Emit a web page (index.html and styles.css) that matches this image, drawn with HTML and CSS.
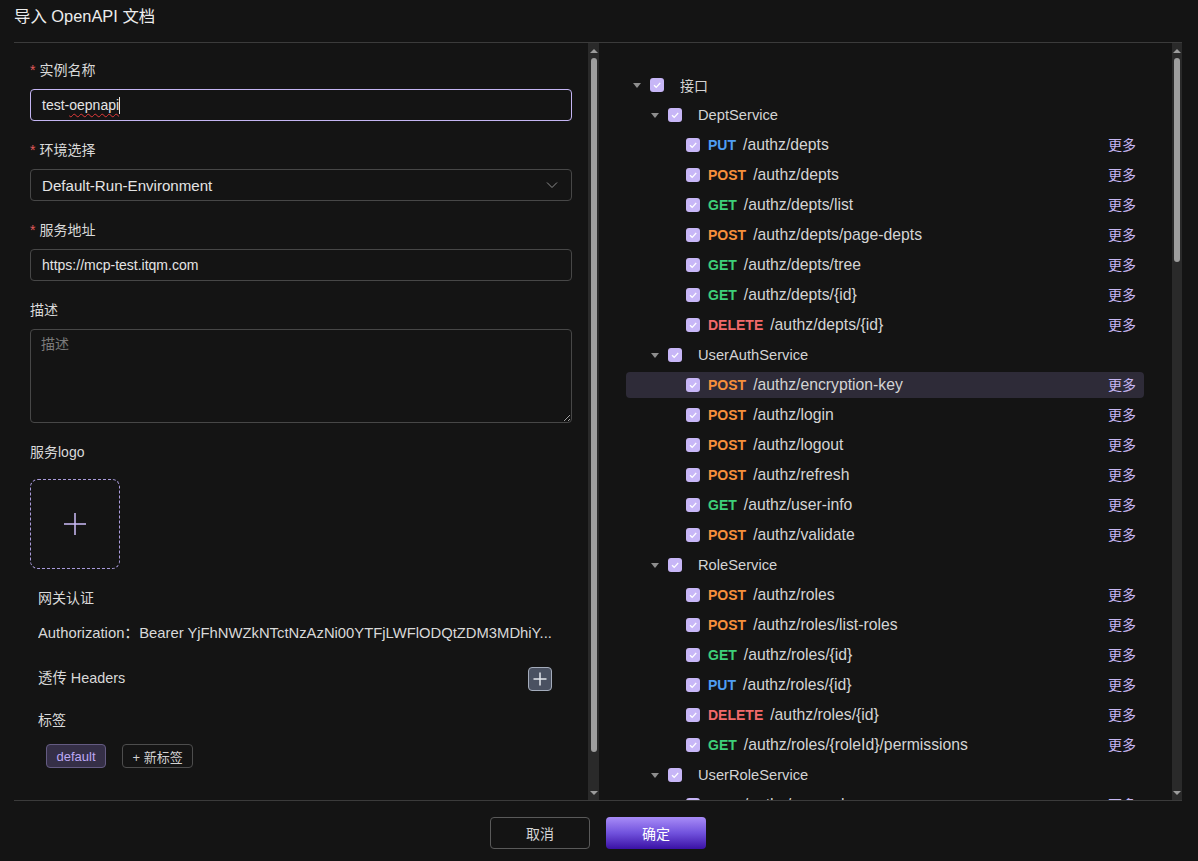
FILE: index.html
```html
<!DOCTYPE html>
<html lang="zh-CN">
<head>
<meta charset="utf-8">
<title>导入 OpenAPI 文档</title>
<link rel="stylesheet" href="styles.css">
</head>
<body>
<div class="dialog">
  <header class="dlg-header">
    <h1 class="dlg-title">导入 OpenAPI 文档</h1>
  </header>

  <main class="dlg-body">
    <section class="pane pane-left">
      <div class="form">
        <div class="field">
          <div class="label"><span class="req">*</span>实例名称</div>
          <div class="input focused">test-<span class="misspelled">oepnapi</span><span class="text-caret"></span></div>
        </div>
        <div class="field">
          <div class="label"><span class="req">*</span>环境选择</div>
          <div class="input select">
            <span class="select-value">Default-Run-Environment</span>
            <svg class="chevron" width="12" height="12" viewBox="0 0 12 12"><polyline points="1,3.5 6,8.5 11,3.5" fill="none" stroke="#8c8c8c" stroke-width="1"/></svg>
          </div>
        </div>
        <div class="field">
          <div class="label"><span class="req">*</span>服务地址</div>
          <div class="input">https://mcp-test.itqm.com</div>
        </div>
        <div class="field">
          <div class="label">描述</div>
          <textarea class="textarea" placeholder="描述"></textarea>
        </div>
        <div class="field">
          <div class="label label-logo">服务logo</div>
          <div class="upload">
            <svg width="24" height="24" viewBox="0 0 24 24"><path d="M12 1v22M1 12h22" stroke="#cbbcf7" stroke-width="1.5" fill="none"/></svg>
          </div>
        </div>

        <div class="sub">
          <div class="sub-title">网关认证</div>
          <div class="auth-value">Authorization：Bearer YjFhNWZkNTctNzAzNi00YTFjLWFlODQtZDM3MDhiY...</div>
          <div class="headers-row">
            <span>透传 Headers</span>
            <span class="icon-btn">
              <svg width="16" height="16" viewBox="0 0 16 16"><path d="M8 1.5v13M1.5 8h13" stroke="#e3e6ec" stroke-width="1.5" fill="none"/></svg>
            </span>
          </div>
          <div class="sub-title tags-title">标签</div>
          <div class="tags">
            <span class="tag tag-default">default</span>
            <span class="tag tag-add">+ 新标签</span>
          </div>
        </div>
      </div>
      <div class="scrollbar sb-left">
        <span class="sb-arrow up"></span>
        <div class="sb-track"><div class="sb-thumb" style="height:694px"></div></div>
        <span class="sb-arrow down"></span>
      </div>
    </section>

    <section class="pane pane-right">
      <div class="tree">
        <div class="node"><span class="caret"></span><span class="cb"><svg width="10" height="10" viewBox="0 0 10 10"><polyline points="2,5.2 4.2,7.3 8.2,3" fill="none" stroke="#fff" stroke-width="1.2"/></svg></span><span class="node-label">接口</span></div>

        <div class="node"><span class="indent"></span><span class="caret"></span><span class="cb"><svg width="10" height="10" viewBox="0 0 10 10"><polyline points="2,5.2 4.2,7.3 8.2,3" fill="none" stroke="#fff" stroke-width="1.2"/></svg></span><span class="node-label svc">DeptService</span></div>
        <div class="node leaf"><span class="indent"></span><span class="indent"></span><span class="caret empty"></span><span class="cb"><svg width="10" height="10" viewBox="0 0 10 10"><polyline points="2,5.2 4.2,7.3 8.2,3" fill="none" stroke="#fff" stroke-width="1.2"/></svg></span><span class="node-label"><b class="m put">PUT</b><span class="path">/authz/depts</span></span><span class="more">更多</span></div>
        <div class="node leaf"><span class="indent"></span><span class="indent"></span><span class="caret empty"></span><span class="cb"><svg width="10" height="10" viewBox="0 0 10 10"><polyline points="2,5.2 4.2,7.3 8.2,3" fill="none" stroke="#fff" stroke-width="1.2"/></svg></span><span class="node-label"><b class="m post">POST</b><span class="path">/authz/depts</span></span><span class="more">更多</span></div>
        <div class="node leaf"><span class="indent"></span><span class="indent"></span><span class="caret empty"></span><span class="cb"><svg width="10" height="10" viewBox="0 0 10 10"><polyline points="2,5.2 4.2,7.3 8.2,3" fill="none" stroke="#fff" stroke-width="1.2"/></svg></span><span class="node-label"><b class="m get">GET</b><span class="path">/authz/depts/list</span></span><span class="more">更多</span></div>
        <div class="node leaf"><span class="indent"></span><span class="indent"></span><span class="caret empty"></span><span class="cb"><svg width="10" height="10" viewBox="0 0 10 10"><polyline points="2,5.2 4.2,7.3 8.2,3" fill="none" stroke="#fff" stroke-width="1.2"/></svg></span><span class="node-label"><b class="m post">POST</b><span class="path">/authz/depts/page-depts</span></span><span class="more">更多</span></div>
        <div class="node leaf"><span class="indent"></span><span class="indent"></span><span class="caret empty"></span><span class="cb"><svg width="10" height="10" viewBox="0 0 10 10"><polyline points="2,5.2 4.2,7.3 8.2,3" fill="none" stroke="#fff" stroke-width="1.2"/></svg></span><span class="node-label"><b class="m get">GET</b><span class="path">/authz/depts/tree</span></span><span class="more">更多</span></div>
        <div class="node leaf"><span class="indent"></span><span class="indent"></span><span class="caret empty"></span><span class="cb"><svg width="10" height="10" viewBox="0 0 10 10"><polyline points="2,5.2 4.2,7.3 8.2,3" fill="none" stroke="#fff" stroke-width="1.2"/></svg></span><span class="node-label"><b class="m get">GET</b><span class="path">/authz/depts/{id}</span></span><span class="more">更多</span></div>
        <div class="node leaf"><span class="indent"></span><span class="indent"></span><span class="caret empty"></span><span class="cb"><svg width="10" height="10" viewBox="0 0 10 10"><polyline points="2,5.2 4.2,7.3 8.2,3" fill="none" stroke="#fff" stroke-width="1.2"/></svg></span><span class="node-label"><b class="m delete">DELETE</b><span class="path">/authz/depts/{id}</span></span><span class="more">更多</span></div>

        <div class="node"><span class="indent"></span><span class="caret"></span><span class="cb"><svg width="10" height="10" viewBox="0 0 10 10"><polyline points="2,5.2 4.2,7.3 8.2,3" fill="none" stroke="#fff" stroke-width="1.2"/></svg></span><span class="node-label svc">UserAuthService</span></div>
        <div class="node leaf hover"><span class="indent"></span><span class="indent"></span><span class="caret empty"></span><span class="cb"><svg width="10" height="10" viewBox="0 0 10 10"><polyline points="2,5.2 4.2,7.3 8.2,3" fill="none" stroke="#fff" stroke-width="1.2"/></svg></span><span class="node-label"><b class="m post">POST</b><span class="path">/authz/encryption-key</span></span><span class="more">更多</span></div>
        <div class="node leaf"><span class="indent"></span><span class="indent"></span><span class="caret empty"></span><span class="cb"><svg width="10" height="10" viewBox="0 0 10 10"><polyline points="2,5.2 4.2,7.3 8.2,3" fill="none" stroke="#fff" stroke-width="1.2"/></svg></span><span class="node-label"><b class="m post">POST</b><span class="path">/authz/login</span></span><span class="more">更多</span></div>
        <div class="node leaf"><span class="indent"></span><span class="indent"></span><span class="caret empty"></span><span class="cb"><svg width="10" height="10" viewBox="0 0 10 10"><polyline points="2,5.2 4.2,7.3 8.2,3" fill="none" stroke="#fff" stroke-width="1.2"/></svg></span><span class="node-label"><b class="m post">POST</b><span class="path">/authz/logout</span></span><span class="more">更多</span></div>
        <div class="node leaf"><span class="indent"></span><span class="indent"></span><span class="caret empty"></span><span class="cb"><svg width="10" height="10" viewBox="0 0 10 10"><polyline points="2,5.2 4.2,7.3 8.2,3" fill="none" stroke="#fff" stroke-width="1.2"/></svg></span><span class="node-label"><b class="m post">POST</b><span class="path">/authz/refresh</span></span><span class="more">更多</span></div>
        <div class="node leaf"><span class="indent"></span><span class="indent"></span><span class="caret empty"></span><span class="cb"><svg width="10" height="10" viewBox="0 0 10 10"><polyline points="2,5.2 4.2,7.3 8.2,3" fill="none" stroke="#fff" stroke-width="1.2"/></svg></span><span class="node-label"><b class="m get">GET</b><span class="path">/authz/user-info</span></span><span class="more">更多</span></div>
        <div class="node leaf"><span class="indent"></span><span class="indent"></span><span class="caret empty"></span><span class="cb"><svg width="10" height="10" viewBox="0 0 10 10"><polyline points="2,5.2 4.2,7.3 8.2,3" fill="none" stroke="#fff" stroke-width="1.2"/></svg></span><span class="node-label"><b class="m post">POST</b><span class="path">/authz/validate</span></span><span class="more">更多</span></div>

        <div class="node"><span class="indent"></span><span class="caret"></span><span class="cb"><svg width="10" height="10" viewBox="0 0 10 10"><polyline points="2,5.2 4.2,7.3 8.2,3" fill="none" stroke="#fff" stroke-width="1.2"/></svg></span><span class="node-label svc">RoleService</span></div>
        <div class="node leaf"><span class="indent"></span><span class="indent"></span><span class="caret empty"></span><span class="cb"><svg width="10" height="10" viewBox="0 0 10 10"><polyline points="2,5.2 4.2,7.3 8.2,3" fill="none" stroke="#fff" stroke-width="1.2"/></svg></span><span class="node-label"><b class="m post">POST</b><span class="path">/authz/roles</span></span><span class="more">更多</span></div>
        <div class="node leaf"><span class="indent"></span><span class="indent"></span><span class="caret empty"></span><span class="cb"><svg width="10" height="10" viewBox="0 0 10 10"><polyline points="2,5.2 4.2,7.3 8.2,3" fill="none" stroke="#fff" stroke-width="1.2"/></svg></span><span class="node-label"><b class="m post">POST</b><span class="path">/authz/roles/list-roles</span></span><span class="more">更多</span></div>
        <div class="node leaf"><span class="indent"></span><span class="indent"></span><span class="caret empty"></span><span class="cb"><svg width="10" height="10" viewBox="0 0 10 10"><polyline points="2,5.2 4.2,7.3 8.2,3" fill="none" stroke="#fff" stroke-width="1.2"/></svg></span><span class="node-label"><b class="m get">GET</b><span class="path">/authz/roles/{id}</span></span><span class="more">更多</span></div>
        <div class="node leaf"><span class="indent"></span><span class="indent"></span><span class="caret empty"></span><span class="cb"><svg width="10" height="10" viewBox="0 0 10 10"><polyline points="2,5.2 4.2,7.3 8.2,3" fill="none" stroke="#fff" stroke-width="1.2"/></svg></span><span class="node-label"><b class="m put">PUT</b><span class="path">/authz/roles/{id}</span></span><span class="more">更多</span></div>
        <div class="node leaf"><span class="indent"></span><span class="indent"></span><span class="caret empty"></span><span class="cb"><svg width="10" height="10" viewBox="0 0 10 10"><polyline points="2,5.2 4.2,7.3 8.2,3" fill="none" stroke="#fff" stroke-width="1.2"/></svg></span><span class="node-label"><b class="m delete">DELETE</b><span class="path">/authz/roles/{id}</span></span><span class="more">更多</span></div>
        <div class="node leaf"><span class="indent"></span><span class="indent"></span><span class="caret empty"></span><span class="cb"><svg width="10" height="10" viewBox="0 0 10 10"><polyline points="2,5.2 4.2,7.3 8.2,3" fill="none" stroke="#fff" stroke-width="1.2"/></svg></span><span class="node-label"><b class="m get">GET</b><span class="path">/authz/roles/{roleId}/permissions</span></span><span class="more">更多</span></div>

        <div class="node"><span class="indent"></span><span class="caret"></span><span class="cb"><svg width="10" height="10" viewBox="0 0 10 10"><polyline points="2,5.2 4.2,7.3 8.2,3" fill="none" stroke="#fff" stroke-width="1.2"/></svg></span><span class="node-label svc">UserRoleService</span></div>
        <div class="node leaf"><span class="indent"></span><span class="indent"></span><span class="caret empty"></span><span class="cb"><svg width="10" height="10" viewBox="0 0 10 10"><polyline points="2,5.2 4.2,7.3 8.2,3" fill="none" stroke="#fff" stroke-width="1.2"/></svg></span><span class="node-label"><b class="m get">GET</b><span class="path">/authz/user-roles</span></span><span class="more">更多</span></div>
        <div class="node leaf"><span class="indent"></span><span class="indent"></span><span class="caret empty"></span><span class="cb"><svg width="10" height="10" viewBox="0 0 10 10"><polyline points="2,5.2 4.2,7.3 8.2,3" fill="none" stroke="#fff" stroke-width="1.2"/></svg></span><span class="node-label"><b class="m post">POST</b><span class="path">/authz/user-roles</span></span><span class="more">更多</span></div>
      </div>
      <div class="scrollbar sb-right">
        <span class="sb-arrow up"></span>
        <div class="sb-track"><div class="sb-thumb" style="height:204px"></div></div>
        <span class="sb-arrow down"></span>
      </div>
    </section>
  </main>

  <footer class="dlg-footer">
    <button class="btn btn-default" type="button">取消</button>
    <button class="btn btn-primary" type="button">确定</button>
  </footer>
</div>
</body>
</html>
```

FILE: styles.css
```css
* {
  box-sizing: border-box;
}

html,
body {
  margin: 0;
  height: 100%;
}

body {
  background: #141414;
  color: #d6d6d6;
  font-family: "Liberation Sans", "Noto Sans CJK SC", sans-serif;
  font-size: 14px;
  overflow: hidden;
}

.dialog {
  height: 861px;
  padding: 0 16px 0 14px;
  display: flex;
  flex-direction: column;
}

/* header */
.dlg-header {
  height: 43px;
  flex: none;
  border-bottom: 1px solid #3b3b3b;
}

.dlg-title {
  margin: 0;
  padding-top: 5px;
  font-size: 16.4px;
  font-weight: normal;
  line-height: 22px;
  color: #ececec;
}

/* body */
.dlg-body {
  height: 758px;
  flex: none;
  display: flex;
  border-bottom: 1px solid #3b3b3b;
}

.pane {
  display: flex;
  min-width: 0;
}

.pane-left {
  width: 585px;
  flex: none;
}

.pane-right {
  flex: 1;
}

/* fake scrollbars */
.scrollbar {
  flex: none;
  background: #2a2a2a;
  display: flex;
  flex-direction: column;
  align-items: center;
}

.sb-left {
  width: 11px;
}

.sb-right {
  width: 10px;
}

.sb-arrow {
  height: 15px;
  flex: none;
  display: flex;
  align-items: center;
  justify-content: center;
}

.sb-arrow::before {
  content: "";
  border-left: 4px solid transparent;
  border-right: 4px solid transparent;
  border-bottom: 4px solid #9c9c9c;
}

.sb-arrow.down::before {
  border-bottom: 0;
  border-top: 4px solid #9c9c9c;
}

.sb-track {
  flex: 1;
  width: 100%;
  display: flex;
  justify-content: center;
}

.sb-thumb {
  width: 6px;
  border-radius: 3px;
  background: #9e9e9e;
}

/* form */
.form {
  flex: 1;
  min-width: 0;
  overflow: hidden;
  padding: 16px 16px 0 16px;
}

.field {
  margin-bottom: 18px;
}

.label {
  line-height: 22px;
  margin-bottom: 8px;
  color: #d9d9d9;
}

.label-logo {
  margin-bottom: 16px;
}

.req {
  color: #e35a5a;
  margin-right: 4px;
}

.input {
  height: 32px;
  border: 1px solid #474747;
  border-radius: 4px;
  padding: 0 11px;
  display: flex;
  align-items: center;
  color: #e4e4e4;
  white-space: pre;
}

.input.focused {
  border-color: #c4b5f3;
}

.misspelled {
  text-decoration: underline wavy #e23a3a;
  text-decoration-thickness: 1px;
  text-underline-offset: 3px;
}

.text-caret {
  display: inline-block;
  width: 1px;
  height: 17px;
  background: #e4e4e4;
}

.select {
  justify-content: space-between;
  padding-right: 13px;
}

.select-value {
  font-size: 15.1px;
}

.chevron {
  flex: none;
}

.textarea {
  display: block;
  width: 100%;
  height: 94px;
  margin: 0;
  border: 1px solid #474747;
  border-radius: 4px;
  padding: 3px 10px;
  background: transparent;
  color: #e4e4e4;
  font-family: inherit;
  font-size: 14px;
  line-height: 22px;
  resize: vertical;
  outline: none;
}

.textarea::placeholder {
  color: #7a7a7a;
}

.upload {
  width: 90px;
  height: 90px;
  border: 1px dashed #a99bdc;
  border-radius: 8px;
  display: flex;
  align-items: center;
  justify-content: center;
}

.sub {
  padding: 0 20px 0 8px;
}

.sub-title {
  line-height: 22px;
  color: #d9d9d9;
}

.auth-value {
  margin-top: 13px;
  line-height: 22px;
  font-size: 14.8px;
  white-space: nowrap;
  overflow: hidden;
  text-overflow: ellipsis;
  color: #d9d9d9;
}

.headers-row {
  margin-top: 23px;
  height: 24px;
  display: flex;
  align-items: center;
  justify-content: space-between;
  color: #d9d9d9;
  font-size: 14.4px;
  line-height: 20px;
}

.headers-row > span:first-child {
  margin-top: -2px;
}

.icon-btn {
  width: 24px;
  height: 24px;
  border: 1px solid #a4acbc;
  border-radius: 4px;
  background: #4a5161;
  display: flex;
  align-items: center;
  justify-content: center;
}

.tags-title {
  margin-top: 18px;
}

.tags {
  margin-top: 13px;
  padding-left: 8px;
  display: flex;
  gap: 16px;
}

.tag {
  height: 24px;
  padding: 0 9.5px;
  border-radius: 4px;
  font-size: 13px;
  display: flex;
  align-items: center;
}

.tag-default {
  background: #352f47;
  border: 1px solid #645b82;
  color: #bca8f5;
}

.tag-add {
  border: 1px solid #4d4d4d;
  color: #d2d2d2;
}

/* tree */
.tree {
  flex: 1;
  min-width: 0;
  overflow: hidden;
  padding: 29px 28px 0 27px;
}

.node {
  height: 26px;
  margin-bottom: 4px;
  padding: 0 8px 0 2px;
  border-radius: 4px;
  display: flex;
  align-items: center;
  color: #d4d4d4;
  white-space: nowrap;
}

.node.hover {
  background: #2e2b38;
}

.indent {
  width: 18px;
  flex: none;
}

.caret {
  width: 18px;
  height: 26px;
  margin-right: 4px;
  flex: none;
  display: flex;
  align-items: center;
  justify-content: center;
}

.caret::before {
  content: "";
  border-left: 4px solid transparent;
  border-right: 4px solid transparent;
  border-top: 5px solid #8e8e8e;
}

.caret.empty::before {
  display: none;
}

.cb {
  width: 14px;
  height: 14px;
  flex: none;
  border-radius: 3px;
  background: #c7b6f7;
  display: flex;
  align-items: center;
  justify-content: center;
}

.node-label {
  margin-left: 16px;
}

.node-label.svc {
  font-size: 14.7px;
}

.leaf .node-label {
  margin-left: 8px;
}

.m {
  font-weight: bold;
  font-size: 14px;
  margin-right: 7px;
}

.path {
  font-size: 15.75px;
}

.m.put {
  color: #4f9ef2;
}

.m.post {
  color: #f7903c;
}

.m.get {
  color: #3ecf79;
}

.m.delete {
  color: #f26a6a;
}

.more {
  margin-left: auto;
  color: #c5b6f2;
  line-height: 20px;
  margin-top: -1px;
}

/* footer */
.dlg-footer {
  flex: 1;
  display: flex;
  justify-content: center;
  align-items: flex-start;
  gap: 16px;
  padding-top: 16px;
}

.btn {
  width: 100px;
  height: 32px;
  border-radius: 4px;
  font-family: inherit;
  font-size: 14px;
  cursor: pointer;
}

.btn-default {
  background: transparent;
  border: 1px solid #5a5a5a;
  color: #d4d4d4;
}

.btn-primary {
  border: none;
  color: #ffffff;
  background: linear-gradient(180deg, #a88cf7 0%, #7152dd 50%, #3a11a5 100%);
}
```
